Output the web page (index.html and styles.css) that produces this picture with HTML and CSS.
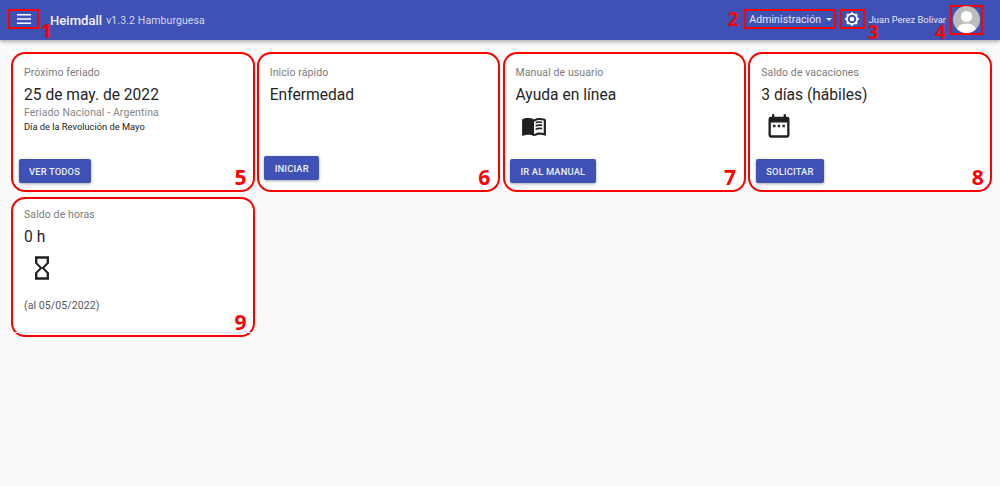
FILE: index.html
```html
<!DOCTYPE html>
<html lang="es">
<head>
<meta charset="utf-8">
<title>Heimdall</title>
<link rel="stylesheet" href="styles.css">
</head>
<body>
<header class="toolbar">
  <button class="menu-btn marked" aria-label="Menú">
    <svg width="14" height="10" viewBox="0 0 14 10"><path d="M0 0h14v1.4H0zM0 4.3h14v1.4H0zM0 8.6h14V10H0z" fill="#fff"/></svg>
    <span class="num num-1">1</span>
  </button>
  <span class="brand">Heimdall</span>
  <span class="version">v1.3.2 Hamburguesa</span>
  <span class="spacer"></span>
  <div class="admin marked">Administración <i class="caret"></i><span class="num num-2">2</span></div>
  <button class="gear-btn marked" aria-label="Tema">
    <svg width="16" height="16" viewBox="0 0 24 24"><path fill="#fff" d="M12 1l3 3h5v5l3 3-3 3v5h-5l-3 3-3-3H4v-5l-3-3 3-3V4h5zm0 4.6a6.4 6.4 0 1 0 0 12.8 6.4 6.4 0 0 0 0-12.8zm0 2.900a3.500 3.500 0 1 1 0 7 3.500 3.500 0 0 1 0-7z" fill-rule="evenodd"/></svg>
    <span class="num num-3">3</span>
  </button>
  <span class="user">Juan Perez Bolivar</span>
  <div class="avatar-box marked">
    <svg width="27" height="27" viewBox="0 0 27 27"><defs><clipPath id="c"><circle cx="13.5" cy="13.5" r="13.5"/></clipPath></defs><g clip-path="url(#c)"><rect width="27" height="27" fill="#bdbdbd"/><circle cx="13.5" cy="10.5" r="5.6" fill="#fff"/><path d="M3.5 27c0-6.500 4-9.500 10-9.500s10 3 10 9.500z" fill="#fff"/></g></svg>
    <span class="num num-4">4</span>
  </div>
</header>
<main class="grid">
  <section class="card">
    <p class="label">Próximo feriado</p>
    <h2 class="value">25 de may. de 2022</h2>
    <p class="sub">Feriado Nacional - Argentina</p>
    <p class="detail">Día de la Revolución de Mayo</p>
    <div class="actions"><a class="btn">VER TODOS</a></div>
    <span class="num num-card">5</span>
  </section>
  <section class="card">
    <p class="label">Inicio rápido</p>
    <h2 class="value">Enfermedad</h2>
    <div class="actions actions-high"><a class="btn">INICIAR</a></div>
    <span class="num num-card num-inset">6</span>
  </section>
  <section class="card">
    <p class="label">Manual de usuario</p>
    <h2 class="value">Ayuda en línea</h2>
    <svg class="icon icon-book" width="26" height="26" viewBox="0 0 24 24"><path fill="#212121" d="M21 5c-1.100-.35-2.300-.5-3.500-.5-1.950 0-4.050.4-5.500 1.500-1.450-1.100-3.550-1.500-5.500-1.500S2.450 4.900 1 6v14.650c0 .25.25.5.5.5.1 0 .15-.05.25-.05C3.100 20.450 5.050 20 6.500 20c1.950 0 4.050.4 5.500 1.500 1.350-.85 3.800-1.500 5.500-1.500 1.650 0 3.350.3 4.750 1.050.1.050.15.05.25.05.25 0 .5-.25.5-.5V6c-.6-.45-1.250-.75-2-1zm0 13.500c-1.100-.35-2.300-.5-3.500-.5-1.700 0-4.150.65-5.500 1.500V8c1.350-.85 3.800-1.500 5.500-1.500 1.200 0 2.400.15 3.500.5z"/><path fill="#212121" d="M13.500 9.600v-1.600c.8-.3 1.900-.5 3-.5.700 0 1.600.1 3 .3v1.500c-2.200-.4-4.300-.2-6 .3zM13.500 12.600V11c1.600-.6 3.900-.7 6-.3v1.500c-2.200-.4-4.300-.2-6 .4zM13.500 15.600V14c1.600-.6 3.900-.7 6-.3v1.500c-2.200-.4-4.300-.2-6 .4zM2 6.500c1.300-.8 3-1.200 4.500-1.200 1.700 0 3.400.3 4.800 1.200v13.900c-1.400-.8-3.100-1.200-4.800-1.200-1.500 0-3.200.3-4.500 1z"/></svg>
    <div class="actions"><a class="btn">IR AL MANUAL</a></div>
    <span class="num num-card num-inset">7</span>
  </section>
  <section class="card">
    <p class="label">Saldo de vacaciones</p>
    <h2 class="value">3 días (hábiles)</h2>
    <svg class="icon" width="28" height="28" viewBox="0 0 24 24"><path fill="#212121" d="M7 11h2v2H7zM11 11h2v2h-2zM15 11h2v2h-2z"/><path fill="#212121" d="M19 4h-1V2h-2v2H8V2H6v2H5a2 2 0 0 0-2 2v14a2 2 0 0 0 2 2h14a2 2 0 0 0 2-2V6a2 2 0 0 0-2-2zm0 16H5V9h14z"/></svg>
    <div class="actions"><a class="btn">SOLICITAR</a></div>
    <span class="num num-card">8</span>
  </section>
  <section class="card card-compact">
    <p class="label">Saldo de horas</p>
    <h2 class="value">0 h</h2>
    <svg class="icon" width="28" height="28" viewBox="0 0 24 24"><path fill="#212121" d="M6 2v6l4 4-4 4v6h12v-6l-4-4 4-4V2zm10 14.500V20H8v-3.500l4-4zm-4-5l-4-4V4h8v3.500z"/></svg>
    <p class="note">(al 05/05/2022)</p>
    <div class="rule"></div>
    <span class="num num-card">9</span>
  </section>
</main>
</body>
</html>
```
FILE: styles.css
```css
* { box-sizing: border-box; }
html, body { margin: 0; height: 100%; }
body { background: #fafafa; font-family: Roboto, "Liberation Sans", sans-serif; color: #212121; overflow: hidden; }
p, h2 { margin: 0; font-weight: 400; }

.toolbar { height: 40px; background: #3f51b5; color: #fff; display: flex; align-items: center; padding: 0 17px 0 8px; box-shadow: 0 2px 4px rgba(0,0,0,.3); position: relative; }
.marked { border: 2px solid #f00; position: relative; }
button { background: none; padding: 0; font: inherit; color: inherit; display: flex; align-items: center; justify-content: center; }
.menu-btn { width: 31px; height: 20px; margin-bottom: 2px; }
.brand { margin-left: 11px; font-size: 13.100px; font-weight: 500; color: #f2f3fa; }
.version { margin-left: 4px; font-size: 10.500px; color: #d5d9ef; letter-spacing: .1px; }
.spacer { flex: 1; }
.admin { width: 92px; height: 20px; margin-bottom: 2px; font-size: 10.500px; color: #e6e8f5; display: flex; align-items: center; padding-left: 3.500px; white-space: nowrap; letter-spacing: .1px; }
.caret { width: 0; height: 0; margin-left: 5px; margin-top: 1px; border: 3.500px solid transparent; border-top: 3.500px solid #e6e8f5; border-bottom: 0; }
.gear-btn { width: 25px; height: 20px; margin-left: 4px; margin-bottom: 2px; }
.user { margin-left: 4px; font-size: 9.400px; line-height: 12px; color: #e6e8f5; white-space: nowrap; }
.avatar-box { width: 33px; height: 30px; margin-left: 4px; margin-bottom: 1px; display: flex; align-items: center; justify-content: center; }

.num { position: absolute; color: #f00; font-family: "Open Sans", sans-serif; font-weight: 700; font-size: 19px; line-height: 14px; }
.num-1 { left: 31px; top: 13px; }
.num-2 { left: -18px; top: 1px; }
.num-3 { left: 26px; top: 14px; }
.num-4 { left: -17px; top: 18px; }
.num-card { right: 6px; bottom: 1px; font-size: 21px; line-height: 24px; }
.num-inset { right: 8px; }

.grid { display: grid; grid-template-columns: repeat(4, 243.5px); grid-auto-rows: 140px; gap: 5px 2.250px; padding: 12px 0 0 11px; }
.card { position: relative; background: #fff; border: 2px solid #f00; border-radius: 14px; padding: 12px 11px 0; display: flex; flex-direction: column; min-width: 0; }
.card-compact { padding-top: 9px; }
.label { font-size: 10.500px; line-height: 14px; color: #7b7b7b; letter-spacing: .1px; }
.value { font-size: 15.600px; line-height: 20px; margin-top: 5px; color: #262626; }
.sub { font-size: 10.500px; line-height: 14px; margin-top: 1px; color: #868686; letter-spacing: .1px; }
.detail { font-size: 9.300px; line-height: 13px; color: #222; }
.icon { margin: 7px 0 0 4px; display: block; }
.icon-book { margin: 8px 0 0 5px; }
.actions { margin-top: auto; margin-left: -5.500px; padding-bottom: 7px; display: flex; }
.actions-high { padding-bottom: 10px; }
.btn { background: #3f51b5; color: #eceef8; font-size: 9.400px; font-weight: 500; letter-spacing: .15px; height: 24px; padding: 0 10.500px; border-radius: 2px; display: flex; align-items: center; box-shadow: 0 1px 3px rgba(0,0,0,.35); }
.note { margin-top: 17px; font-size: 10.500px; line-height: 14px; color: #555; letter-spacing: .1px; }
.rule { margin: auto -11px 2px; border-bottom: 1px solid #e6e6e6; }
```
